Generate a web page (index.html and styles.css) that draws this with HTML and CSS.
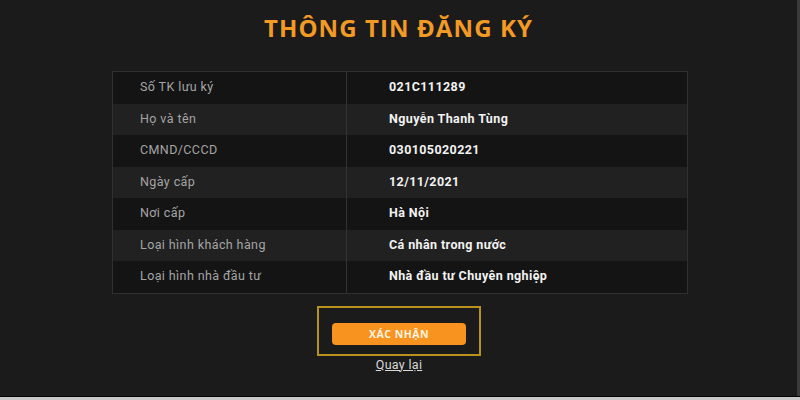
FILE: index.html
```html
<!DOCTYPE html>
<html lang="vi">
<head>
<meta charset="utf-8">
<link rel="stylesheet" href="styles.css">
</head>
<body>
<div class="frame">
  <main class="page">
    <h1 class="title">THÔNG TIN ĐĂNG KÝ</h1>
    <div class="table">
      <div class="row"><div class="label">Số TK lưu ký</div><div class="value">021C111289</div></div>
      <div class="row"><div class="label">Họ và tên</div><div class="value">Nguyễn Thanh Tùng</div></div>
      <div class="row"><div class="label">CMND/CCCD</div><div class="value">030105020221</div></div>
      <div class="row"><div class="label">Ngày cấp</div><div class="value">12/11/2021</div></div>
      <div class="row"><div class="label">Nơi cấp</div><div class="value">Hà Nội</div></div>
      <div class="row"><div class="label">Loại hình khách hàng</div><div class="value">Cá nhân trong nước</div></div>
      <div class="row"><div class="label">Loại hình nhà đầu tư</div><div class="value">Nhà đầu tư Chuyên nghiệp</div></div>
    </div>
    <div class="actions">
      <div class="focus"><button class="confirm">XÁC NHẬN</button></div>
      <a class="back" href="#">Quay lại</a>
    </div>
  </main>
</div>
</body>
</html>
```
FILE: styles.css
```css
* { box-sizing: border-box; }
html, body { margin: 0; padding: 0; }
body {
  width: 800px;
  height: 400px;
  background: #c9c9c9;
  font-family: "Roboto", "Liberation Sans", Arial, sans-serif;
  overflow: hidden;
}
.frame {
  width: 800px;
  height: 397px;
  background: #3a3a3a;
  padding-right: 3px;
  border-bottom: 1px solid #050505;
}
.page {
  height: 396px;
  background: #1b1b1b;
  display: flex;
  flex-direction: column;
  align-items: center;
  padding-top: 14px;
}
.title {
  margin: 0;
  font-family: "Open Sans", "Liberation Sans", sans-serif;
  font-size: 24px;
  font-weight: 700;
  letter-spacing: 1.1px;
  color: #f39a25;
  line-height: 28px;
}
.table {
  margin-top: 29px;
  margin-left: 3px;
  width: 576px;
  border: 1px solid #303030;
  display: flex;
  flex-direction: column;
}
.row {
  display: grid;
  grid-template-columns: 234px 1fr;
  height: 31.5px;
  align-items: center;
}
.row:nth-child(odd) { background: #141414; }
.row:nth-child(even) { background: #212121; }
.label {
  height: 100%;
  display: flex;
  align-items: center;
  padding-left: 27px;
  padding-bottom: 2px;
  border-right: 1px solid #333;
  color: #a5a5a5;
  font-size: 12.5px;
  letter-spacing: 0.4px;
}
.value {
  padding-left: 42px;
  padding-bottom: 2px;
  color: #f2f2f2;
  font-weight: 700;
  font-size: 12.5px;
  letter-spacing: 0.4px;
}
.actions {
  margin-top: 12px;
  margin-left: 1px;
  display: flex;
  flex-direction: column;
  align-items: center;
}
.focus {
  width: 164px;
  height: 50px;
  border: 2px solid #b8921c;
  display: flex;
  justify-content: center;
  padding-top: 15px;
}
.confirm {
  width: 134px;
  height: 22px;
  border: none;
  border-radius: 4px;
  background: #f7931e;
  color: #fff4e0;
  font-family: "Open Sans", "Liberation Sans", sans-serif;
  font-weight: 700;
  font-size: 10.5px;
  letter-spacing: 0.5px;
  padding: 0;
}
.back {
  margin-top: 1px;
  color: #d8d8d8;
  font-size: 12.5px;
  letter-spacing: 0.3px;
  text-decoration: underline;
}
```
